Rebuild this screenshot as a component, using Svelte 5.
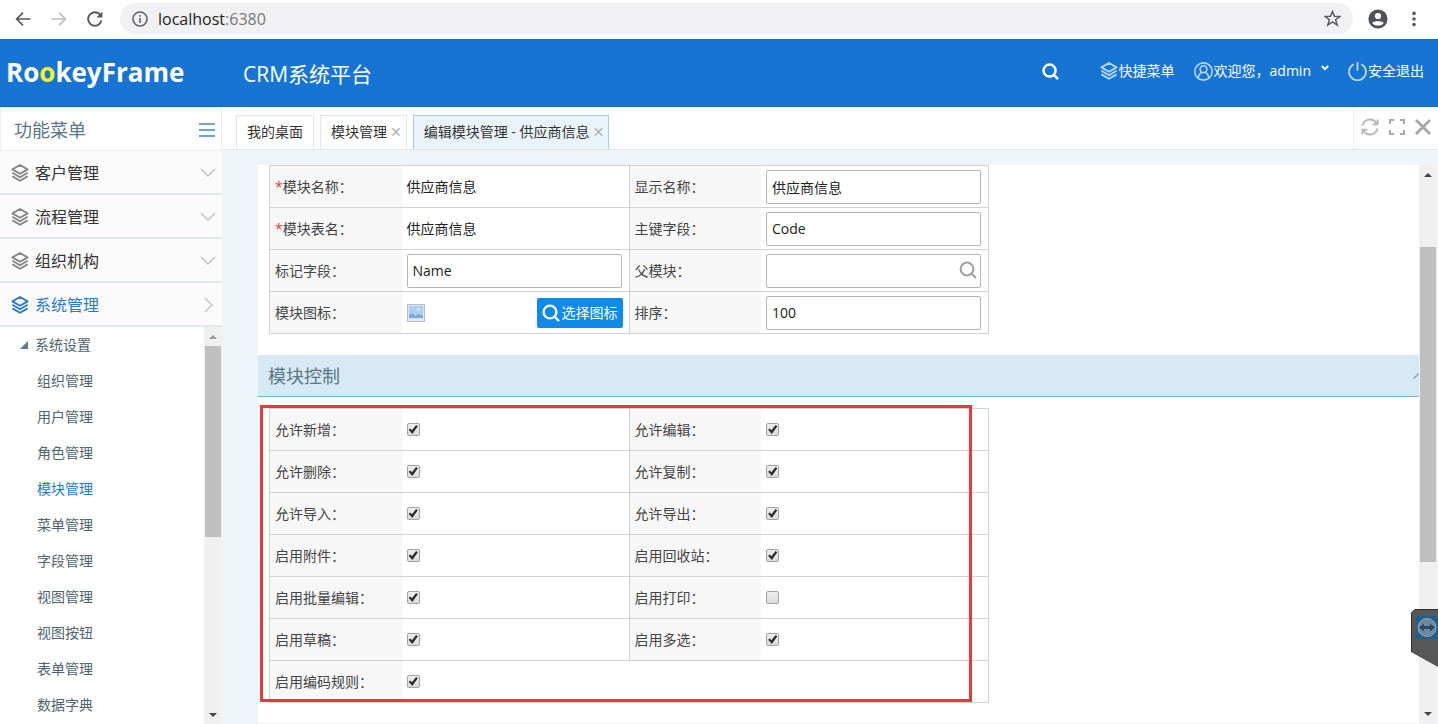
<script lang="ts">
    type Check = { id: string, label: string, on: boolean }

    const groups = ['客户管理', '流程管理', '组织机构', '系统管理']
    const pages = ['组织管理', '用户管理', '角色管理', '模块管理', '菜单管理', '字段管理', '视图管理', '视图按钮', '表单管理', '数据字典']

    let openGroup = $state('系统管理')
    let page = $state('模块管理')
    let form = $state({ display: '供应商信息', key: 'Code', mark: 'Name', parent: '', sort: '100' })

    let checks: Check[][] = $state([
        [{ id: 'add', label: '允许新增', on: true }, { id: 'edit', label: '允许编辑', on: true }],
        [{ id: 'delete', label: '允许删除', on: true }, { id: 'copy', label: '允许复制', on: true }],
        [{ id: 'import', label: '允许导入', on: true }, { id: 'export', label: '允许导出', on: true }],
        [{ id: 'attach', label: '启用附件', on: true }, { id: 'recycle', label: '启用回收站', on: true }],
        [{ id: 'batch', label: '启用批量编辑', on: true }, { id: 'print', label: '启用打印', on: false }],
        [{ id: 'draft', label: '启用草稿', on: true }, { id: 'multi', label: '启用多选', on: true }],
        [{ id: 'code', label: '启用编码规则', on: true }],
    ])
</script>

{#snippet layers()}
    <svg class="layers" viewBox="0 0 18 18" width="18" height="18" fill="none" stroke="currentColor" stroke-width="1.8" stroke-linejoin="round">
        <path d="M9 1L16.6 5.4L9 9.8L1.4 5.4Z" />
        <path d="M1.4 8.8L9 13.2L16.6 8.8M1.4 12.4L9 16.8L16.6 12.4" />
    </svg>
{/snippet}

{#snippet lens(size: number, width: number)}
    <svg viewBox="0 0 18 18" width={size} height={size} fill="none" stroke="currentColor" stroke-width={width}>
        <circle cx="8" cy="8" r="6.4" />
        <path d="M12.6 12.6L17 17" />
    </svg>
{/snippet}

<div class="window">
    <div class="browser">
        <button aria-label="Back"><svg viewBox="0 0 16 16" width="16" height="16" fill="none" stroke="#55585c" stroke-width="1.7"><path d="M15.4 8H2M8 1.6L1.6 8L8 14.4" /></svg></button>
        <button aria-label="Forward"><svg viewBox="0 0 16 16" width="16" height="16" fill="none" stroke="#bcbec1" stroke-width="1.7"><path d="M0.6 8H14M8 1.6L14.4 8L8 14.4" /></svg></button>
        <button aria-label="Reload"><svg viewBox="0 0 16 16" width="16" height="16" fill="none" stroke="#55585c" stroke-width="1.9"><path d="M14.4 9.6A6.7 6.7 0 1 1 12.8 3.4" /><path d="M15.4 0.6V6.6H9.4Z" fill="#55585c" stroke="none" /></svg></button>
        <div class="address">
            <svg viewBox="0 0 16 16" width="16" height="16" fill="none" stroke="#5f6368" stroke-width="1.6"><circle cx="8" cy="8" r="7" /><path d="M8 7V12M8 4V5.8" /></svg>
            <span class="url">localhost<span>:6380</span></span>
            <svg viewBox="0 0 16 16" width="17" height="17" fill="none" stroke="#55585c" stroke-width="1.4"><path d="M8 1.4L9.9 6H15L10.9 9.1L12.4 14.2L8 11.2L3.6 14.2L5.1 9.1L1 6H6.1Z" /></svg>
        </div>
        <svg viewBox="0 0 20 20" width="20" height="20"><circle cx="10" cy="10" r="9.6" fill="#505357" /><circle cx="10" cy="7" r="3.1" fill="#fff" /><path d="M4.2 14C5.6 11.6 14.4 11.6 15.8 14C14 17.4 6 17.4 4.2 14Z" fill="#fff" /></svg>
        <svg viewBox="0 0 16 16" width="16" height="16" fill="#55585c"><circle cx="8" cy="2.4" r="1.8" /><circle cx="8" cy="8" r="1.8" /><circle cx="8" cy="13.6" r="1.8" /></svg>
    </div>

    <header>
        <div class="logo">Ro<span>o</span>keyFrame</div>
        <h1>CRM系统平台</h1>
        <nav>
            <button class="search" aria-label="搜索">{@render lens(17, 2.6)}</button>
            <a href="#menu">{@render layers()}快捷菜单</a>
            <a href="#user">
                <svg viewBox="0 0 18 18" width="19" height="19" fill="none" stroke="currentColor" stroke-width="1.5"><circle cx="9" cy="9" r="8.2" /><circle cx="9" cy="6.8" r="3.2" /><path d="M4 15.4C4 12.4 5.6 10.8 7.4 9.6M14 15.4C14 12.4 12.4 10.8 10.6 9.6" /></svg>
                欢迎您，admin
                <svg class="caret" viewBox="0 0 8 6" width="8" height="6" fill="none" stroke="#fff" stroke-width="2"><path d="M0.8 1L4 4.2L7.2 1" /></svg>
            </a>
            <a href="#logout">
                <svg viewBox="0 0 18 18" width="19" height="19" fill="none" stroke="currentColor" stroke-width="1.7"><path d="M5.4 2.2A8 8 0 1 0 12.6 2.2M9 0V8.4" /></svg>
                安全退出
            </a>
        </nav>
    </header>

    <div class="body">
        <aside>
            <div class="menu-title">
                <h2>功能菜单</h2>
                <button aria-label="收起菜单"><svg viewBox="0 0 16 14" width="16" height="14" stroke="#6fa5d6" stroke-width="2"><path d="M0 1H16M0 7H16M0 13H16" /></svg></button>
            </div>
            {#each groups as group}
                <button class="group" class:open={openGroup === group} onclick={() => openGroup = group}>
                    {@render layers()}
                    <span>{group}</span>
                    <svg viewBox="0 0 16 16" width="16" height="16" fill="none" stroke="#bdbdbd" stroke-width="1.3">
                        <path d={openGroup === group ? 'M5 1L12 8L5 15' : 'M1 4L8 11L15 4'} />
                    </svg>
                </button>
            {/each}
            <div class="tree">
                <ul>
                    <li class="root"><svg viewBox="0 0 8 8" width="8" height="8" fill="#5b7f85"><path d="M8 0V8H0Z" /></svg>系统设置</li>
                    {#each pages as name}
                        <li><a href="#page" class:active={page === name} onclick={() => page = name}>{name}</a></li>
                    {/each}
                </ul>
                <div class="scrollbar">
                    <i class="up"></i>
                    <div class="thumb small"></div>
                    <i class="down"></i>
                </div>
            </div>
        </aside>

        <main>
            <div class="tabs">
                <button class="tab">我的桌面</button>
                <button class="tab closable">模块管理<span>✕</span></button>
                <button class="tab closable current">编辑模块管理 - 供应商信息<span>✕</span></button>
                <div class="tools">
                    <button aria-label="刷新"><svg viewBox="0 0 18 18" width="18" height="18" fill="none" stroke="#b3b3b3" stroke-width="1.8"><path d="M1.6 7.6A7.4 7.4 0 0 1 15.4 5.4M16.4 10.4A7.4 7.4 0 0 1 2.6 12.6" /><path d="M16.6 1.4V6.4H11.6M1.4 16.6V11.6H6.4" /></svg></button>
                    <button aria-label="全屏"><svg viewBox="0 0 16 16" width="16" height="16" fill="none" stroke="#a9a9a9" stroke-width="2"><path d="M1 5V1H5M11 1H15V5M15 11V15H11M5 15H1V11" /></svg></button>
                    <button aria-label="关闭"><svg viewBox="0 0 16 16" width="16" height="16" fill="none" stroke="#a6a6a6" stroke-width="2.8"><path d="M1 1L15 15M15 1L1 15" /></svg></button>
                </div>
            </div>

            <div class="content">
                <div class="pane">
                    <table>
                        <tbody>
                            <tr>
                                <th><b>*</b>模块名称：</th>
                                <td>供应商信息</td>
                                <th><label for="display">显示名称：</label></th>
                                <td><input id="display" type="text" bind:value={form.display}></td>
                            </tr>
                            <tr>
                                <th><b>*</b>模块表名：</th>
                                <td>供应商信息</td>
                                <th><label for="key">主键字段：</label></th>
                                <td><input id="key" type="text" bind:value={form.key}></td>
                            </tr>
                            <tr>
                                <th><label for="mark">标记字段：</label></th>
                                <td><input id="mark" type="text" bind:value={form.mark}></td>
                                <th><label for="parent">父模块：</label></th>
                                <td>
                                    <div class="lookup">
                                        <input id="parent" type="text" bind:value={form.parent}>
                                        <button aria-label="选择父模块">{@render lens(18, 2)}</button>
                                    </div>
                                </td>
                            </tr>
                            <tr>
                                <th>模块图标：</th>
                                <td>
                                    <div class="icon-row">
                                        <svg viewBox="0 0 18 18" width="18" height="18">
                                            <rect x="0.5" y="0.5" width="17" height="17" fill="#dfe6ee" stroke="#b4bec8" />
                                            <rect x="2" y="2" width="14" height="12" fill="#a9cef1" />
                                            <path d="M2 14V11L5 9L8 12L11 10L16 12V14Z" fill="#7ba6d3" />
                                            <circle cx="11.5" cy="5.5" r="2" fill="#c4e0f9" />
                                        </svg>
                                        <button class="pick">{@render lens(18, 2.4)}选择图标</button>
                                    </div>
                                </td>
                                <th><label for="sort">排序：</label></th>
                                <td><input id="sort" type="text" bind:value={form.sort}></td>
                            </tr>
                        </tbody>
                    </table>

                    <div class="section-title">
                        <h2>模块控制</h2>
                        <svg viewBox="0 0 6 8" width="6" height="8" fill="none" stroke="#8aa9bd" stroke-width="1.6"><path d="M0.6 6.6L6 1.4" /></svg>
                    </div>

                    <div class="controls">
                        <table>
                            <tbody>
                                {#each checks as row}
                                    <tr>
                                        {#each row as item}
                                            <th><label for={item.id}>{item.label}：</label></th>
                                            <td colspan={row.length === 1 ? 3 : 1}><input id={item.id} type="checkbox" bind:checked={item.on}></td>
                                        {/each}
                                    </tr>
                                {/each}
                            </tbody>
                        </table>
                        <div class="marker"></div>
                    </div>
                </div>
                <div class="scrollbar">
                    <i class="up dark"></i>
                    <div class="thumb large"></div>
                    <i class="down"></i>
                </div>
            </div>
        </main>
    </div>

    <div class="remote">
        <svg viewBox="0 0 27 58" width="27" height="58">
            <path d="M0 4L4 0H27V58L0 43Z" fill="#575757" />
            <path d="M0.5 43V4L4 0.5H27" fill="none" stroke="#2f2f2f" />
            <rect x="5" y="7" width="22" height="23" fill="#1d5f8e" />
            <circle cx="16" cy="18.5" r="9" fill="#71879a" stroke="#98a7b3" />
            <path d="M8 18.5L13 14.5V17H19V14.5L24 18.5L19 22.5V20H13V22.5Z" fill="#274a68" />
        </svg>
    </div>
</div>

<style>
    :global(body) {
        overflow: hidden;
    }

    .window {
        position: relative;
        display: flex;
        flex-direction: column;
        height: 100vh;
        background: #fff;
        color: #333;
        font: 14px/20px "Open Sans", "Noto Sans CJK SC", sans-serif;
    }

    button {
        display: flex;
        align-items: center;
        padding: 0;
        border: 0;
        background: none;
        color: inherit;
        font: inherit;
        cursor: pointer;
    }

    a {
        color: inherit;
        text-decoration: none;
    }

    h1, h2 {
        margin: 0;
        font-weight: 400;
    }

    svg {
        flex: none;
    }

    .browser {
        display: flex;
        align-items: center;
        gap: 20px;
        height: 39px;
        flex: none;
        padding: 0 16px 2px 15px;
        box-sizing: border-box;
    }

    .address {
        flex: 1;
        display: flex;
        align-items: center;
        gap: 10px;
        height: 31px;
        margin: 0 -5px 0 -3px;
        padding: 0 12px;
        border-radius: 16px;
        background: #f1f1f4;
    }

    .browser > svg:last-child {
        margin-left: -2px;
    }

    .url {
        flex: 1;
        font-size: 16px;
        color: #222;
    }

    .url span {
        color: #777;
    }

    header {
        display: flex;
        align-items: center;
        height: 68px;
        flex: none;
        box-sizing: border-box;
        border-top: 1px solid #1b6cbd;
        border-bottom: 1px solid #1766b3;
        background: #1874d2;
        color: #fff;
    }

    .logo {
        width: 223px;
        height: 100%;
        box-sizing: border-box;
        padding-left: 6px;
        border-right: 1px solid #1a6fc6;
        font-size: 26px;
        font-weight: 700;
        line-height: 64px;
    }

    .logo span {
        color: #f4f81c;
    }

    h1 {
        padding: 2px 0 0 20px;
        font-size: 21px;
        line-height: 28px;
    }

    nav {
        display: flex;
        align-items: center;
        gap: 19px;
        margin-left: auto;
        padding: 0 14px 4px 0;
    }

    nav a {
        display: flex;
        align-items: center;
        gap: 1px;
    }

    nav a > svg {
        color: #b9daf8;
    }

    nav .caret {
        margin: 0 0 6px 9px;
    }

    nav .search {
        margin-right: 22px;
    }

    .body {
        flex: 1;
        display: flex;
        min-height: 0;
    }

    aside {
        width: 222px;
        flex: none;
        display: flex;
        flex-direction: column;
        background: #fbfbfb;
    }

    .menu-title {
        display: flex;
        align-items: center;
        justify-content: space-between;
        height: 44px;
        flex: none;
        box-sizing: border-box;
        padding: 1px 6px 0 13px;
        border: 1px solid #e9eef0;
        background: #fff;
    }

    h2 {
        font-size: 18px;
        line-height: 26px;
        color: #5a7687;
    }

    .group {
        gap: 6px;
        height: 44px;
        flex: none;
        box-sizing: border-box;
        padding: 1px 6px 0 11px;
        border-bottom: 2px solid #e0e9ea;
        font-size: 16px;
        text-align: left;
        color: #333;
    }

    .group span {
        flex: 1;
    }

    .group .layers {
        color: #858585;
    }

    .group.open, .group.open .layers {
        color: #2a7acb;
    }

    .tree {
        flex: 1;
        display: flex;
        min-height: 0;
        background: #fff;
    }

    ul {
        flex: 1;
        margin: 0;
        padding: 0;
        list-style: none;
        overflow: hidden;
    }

    li {
        padding-left: 37px;
        line-height: 36px;
        color: #52646e;
    }

    li.root {
        display: flex;
        align-items: center;
        gap: 7px;
        padding-left: 20px;
    }

    li .active {
        color: #1f78cf;
    }

    .scrollbar {
        width: 18px;
        flex: none;
        display: flex;
        flex-direction: column;
        align-items: center;
        padding: 8px 0 7px;
        box-sizing: border-box;
        background: #f0f0f0;
    }

    .scrollbar i {
        border: 4px solid transparent;
    }

    .scrollbar .up {
        border-top: 0;
        border-bottom-color: #9a9a9a;
    }

    .scrollbar .up.dark {
        border-bottom-color: #444;
    }

    .scrollbar .down {
        margin-top: auto;
        border-bottom: 0;
        border-top-color: #444;
    }

    .thumb {
        width: 16px;
        background: #bfbfbf;
    }

    .thumb.small {
        height: 50%;
        margin-top: 7px;
    }

    .thumb.large {
        height: 58%;
        margin-top: 70px;
    }

    main {
        flex: 1;
        display: flex;
        flex-direction: column;
        min-width: 0;
        background: #eef4f8;
    }

    .tabs {
        display: flex;
        align-items: flex-end;
        gap: 6px;
        height: 43px;
        flex: none;
        box-sizing: border-box;
        padding-left: 14px;
        border-bottom: 1px solid #e1e6ea;
        background: #fff;
    }

    .tab {
        height: 34px;
        padding: 0 10px 2px;
        border: 1px solid #e2e6e8;
        border-bottom: 0;
        background: #fff;
        color: #333;
        white-space: nowrap;
    }

    .tab.closable {
        padding-right: 4px;
    }

    .tab span {
        margin-left: 3px;
        font: 14px/16px "DejaVu Sans", sans-serif;
        color: #b0b0b0;
    }

    .tab.current {
        border-color: #a9cbdf;
        background: #eaf3f9;
    }

    .tools {
        display: flex;
        align-items: center;
        gap: 10px;
        height: 42px;
        margin-left: auto;
        padding: 0 7px 3px;
        box-sizing: border-box;
        border-left: 1px solid #f3f3f3;
    }

    .content {
        flex: 1;
        display: flex;
        min-height: 0;
        padding: 15px 1px 1px 36px;
    }

    .pane {
        flex: 1;
        min-width: 0;
        overflow: hidden;
        background: #fff;
    }

    table {
        width: calc(100% - 22px);
        max-width: 720px;
        margin-left: 11px;
        table-layout: fixed;
        border-collapse: collapse;
        border: 1px solid #d3d3d3;
    }

    tr {
        height: 42px;
        border-bottom: 1px solid #d3d3d3;
    }

    th, td {
        box-sizing: border-box;
        padding: 0 5px;
        text-align: left;
    }

    th {
        width: 132px;
        background: #f7f7f7;
        font-weight: 400;
        color: #444;
    }

    td {
        border-right: 1px solid #d3d3d3;
        color: #222;
    }

    th b {
        font-weight: 400;
        color: #e23b3b;
    }

    input[type="text"] {
        display: block;
        width: 100%;
        max-width: 215px;
        height: 34px;
        box-sizing: border-box;
        padding: 0 5px;
        border: 1px solid #b5b5b5;
        border-radius: 2px;
        background: #fff;
        color: #222;
        font: inherit;
    }

    .lookup {
        position: relative;
        max-width: 215px;
    }

    .lookup button {
        position: absolute;
        top: 7px;
        right: 4px;
        color: #a0a0a0;
    }

    .icon-row {
        display: flex;
        align-items: center;
        justify-content: space-between;
        max-width: 216px;
    }

    .pick {
        gap: 2px;
        height: 30px;
        padding: 0 5px;
        border-radius: 2px;
        background: #0e8ae8;
        color: #fff;
    }

    input[type="checkbox"] {
        appearance: none;
        display: block;
        width: 13px;
        height: 13px;
        margin: 0;
        box-sizing: border-box;
        border: 1px solid #a2a2a2;
        border-radius: 2px;
        background: linear-gradient(#ededed, #dcdcdc);
    }

    input[type="checkbox"]:checked::before {
        content: "";
        display: block;
        width: 11px;
        height: 11px;
        background: #2f2f2f;
        clip-path: polygon(10% 52%, 26% 40%, 40% 56%, 78% 8%, 94% 20%, 44% 92%);
    }

    .section-title {
        display: flex;
        align-items: center;
        justify-content: space-between;
        height: 42px;
        margin: 21px 0 11px;
        padding-left: 10px;
        box-sizing: border-box;
        border-bottom: 1px solid #7fb0cb;
        background: #d6e9f5;
    }

    .controls {
        position: relative;
    }

    .marker {
        position: absolute;
        top: -3px;
        left: 2px;
        width: 712px;
        height: 297px;
        box-sizing: border-box;
        border: 3px solid #e5393f;
        pointer-events: none;
    }

    .remote {
        position: absolute;
        right: 0;
        bottom: 57px;
        display: flex;
    }
</style>
